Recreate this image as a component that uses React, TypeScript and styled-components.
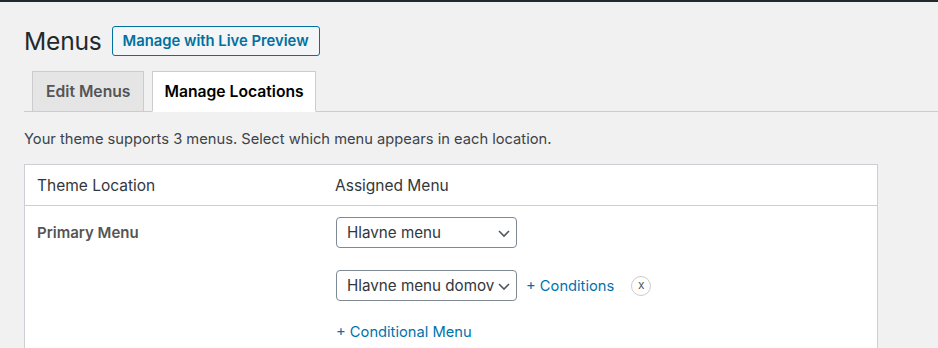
import React from "react";
import styled, { createGlobalStyle } from "styled-components";

const GlobalStyle = createGlobalStyle`
    html, body {
        margin: 0;
        padding: 0;
        background: #f1f1f1;
    }
    body {
        font-family: Inter, "Noto Sans", "Liberation Sans", sans-serif;
        color: #3c434a;
    }
`;

const Page = styled.div`
    border-top: 2px solid #23282d;
    height: 348px;
    padding: 0 0 0 24px;
    box-sizing: border-box;
    overflow: hidden;
`;

const Header = styled.div`
    display: flex;
    align-items: center;
    gap: 10px;
    padding-top: 23px;
    height: 31px;
`;

const Title = styled.h1`
    margin: 0;
    font-size: 24.6px;
    font-weight: 400;
    color: #23282d;
    letter-spacing: -0.2px;
`;

const PreviewButton = styled.button`
    height: 30px;
    padding: 0 10px;
    border: 1px solid #0071a1;
    border-radius: 3px;
    background: #f3f5f6;
    color: #0071a1;
    font-family: inherit;
    font-size: 14.8px;
    font-weight: 600;
    cursor: pointer;
`;

const TabBar = styled.div`
    display: flex;
    align-items: flex-end;
    gap: 8px;
    margin-top: 15px;
    padding-left: 8px;
    border-bottom: 1px solid #ccc;
    height: 40px;
`;

const Tab = styled.div<{ active?: boolean }>`
    box-sizing: border-box;
    display: flex;
    align-items: center;
    padding: ${(p) => (p.active ? "0 11px" : "0 13px")};
    border: 1px solid #ccc;
    border-bottom: ${(p) => (p.active ? "1px solid #fff" : "none")};
    margin-bottom: ${(p) => (p.active ? "-1px" : "0")};
    height: ${(p) => (p.active ? "41px" : "40px")};
    background: ${(p) => (p.active ? "#fff" : "#e5e5e5")};
    color: ${(p) => (p.active ? "#000" : "#555")};
    font-size: 15.7px;
    font-weight: 600;
`;

const Intro = styled.p`
    margin: 18px 0 0;
    font-size: 14.7px;
    color: #3c434a;
`;

const Table = styled.div`
    margin-top: 16px;
    width: 854px;
    background: #fff;
    border: 1px solid #ccd0d4;
    box-sizing: border-box;
`;

const HeadRow = styled.div`
    display: grid;
    grid-template-columns: 298px 1fr;
    height: 40px;
    align-items: center;
    padding-left: 12px;
    border-bottom: 1px solid #ccd0d4;
    font-size: 15.5px;
    color: #32373c;
`;

const BodyRow = styled.div`
    display: grid;
    grid-template-columns: 299px 1fr;
    padding: 11px 0 0 12px;
    height: 140px;
`;

const LocationName = styled.div`
    font-size: 15px;
    font-weight: 600;
    color: #555;
    padding-top: 6px;
`;

const Assign = styled.div`
    display: flex;
    flex-direction: column;
    gap: 22px;
`;

const Line = styled.div`
    display: flex;
    align-items: center;
`;

const Select = styled.div`
    width: 181px;
    height: 31px;
    box-sizing: border-box;
    border: 1px solid #7e8993;
    border-radius: 4px;
    display: flex;
    align-items: center;
    padding: 0 2px 0 10px;
    font-size: 15.2px;
    color: #32373c;
    background: #fff;
    white-space: nowrap;
    overflow: hidden;
`;

const SelectValue = styled.span`
    flex: 1;
    overflow: hidden;
`;

const Chevron = () => (
    <svg width="14" height="14" viewBox="0 0 14 14" fill="none" style={{ flexShrink: 0, marginRight: 3 }}>
        <path d="M2 5l5 5 5-5" stroke="#50575e" strokeWidth="1.6" />
    </svg>
);

const Link = styled.a`
    color: #0073aa;
    font-size: 14.7px;
    text-decoration: none;
    cursor: pointer;
`;

const ConditionsLink = styled(Link)`
    margin-left: 9px;
`;

const RemoveButton = styled.span`
    margin-left: 17px;
    width: 20px;
    height: 20px;
    border: 1px solid #ccc;
    border-radius: 50%;
    display: flex;
    align-items: center;
    justify-content: center;
    font-size: 12px;
    color: #555;
    line-height: 1;
    padding-bottom: 1px;
    box-sizing: border-box;
`;

const App: React.FC = () => {
    return (
        <Page>
            <GlobalStyle />
            <Header>
                <Title>Menus</Title>
                <PreviewButton>Manage with Live Preview</PreviewButton>
            </Header>
            <TabBar>
                <Tab>Edit Menus</Tab>
                <Tab active>Manage Locations</Tab>
            </TabBar>
            <Intro>Your theme supports 3 menus. Select which menu appears in each location.</Intro>
            <Table>
                <HeadRow>
                    <span>Theme Location</span>
                    <span>Assigned Menu</span>
                </HeadRow>
                <BodyRow>
                    <LocationName>Primary Menu</LocationName>
                    <Assign>
                        <Line>
                            <Select>
                                <SelectValue>Hlavne menu</SelectValue>
                                <Chevron />
                            </Select>
                        </Line>
                        <Line>
                            <Select>
                                <SelectValue>Hlavne menu domov</SelectValue>
                                <Chevron />
                            </Select>
                            <ConditionsLink>+ Conditions</ConditionsLink>
                            <RemoveButton>x</RemoveButton>
                        </Line>
                        <Line>
                            <Link>+ Conditional Menu</Link>
                        </Line>
                    </Assign>
                </BodyRow>
            </Table>
        </Page>
    );
};

export default App;
